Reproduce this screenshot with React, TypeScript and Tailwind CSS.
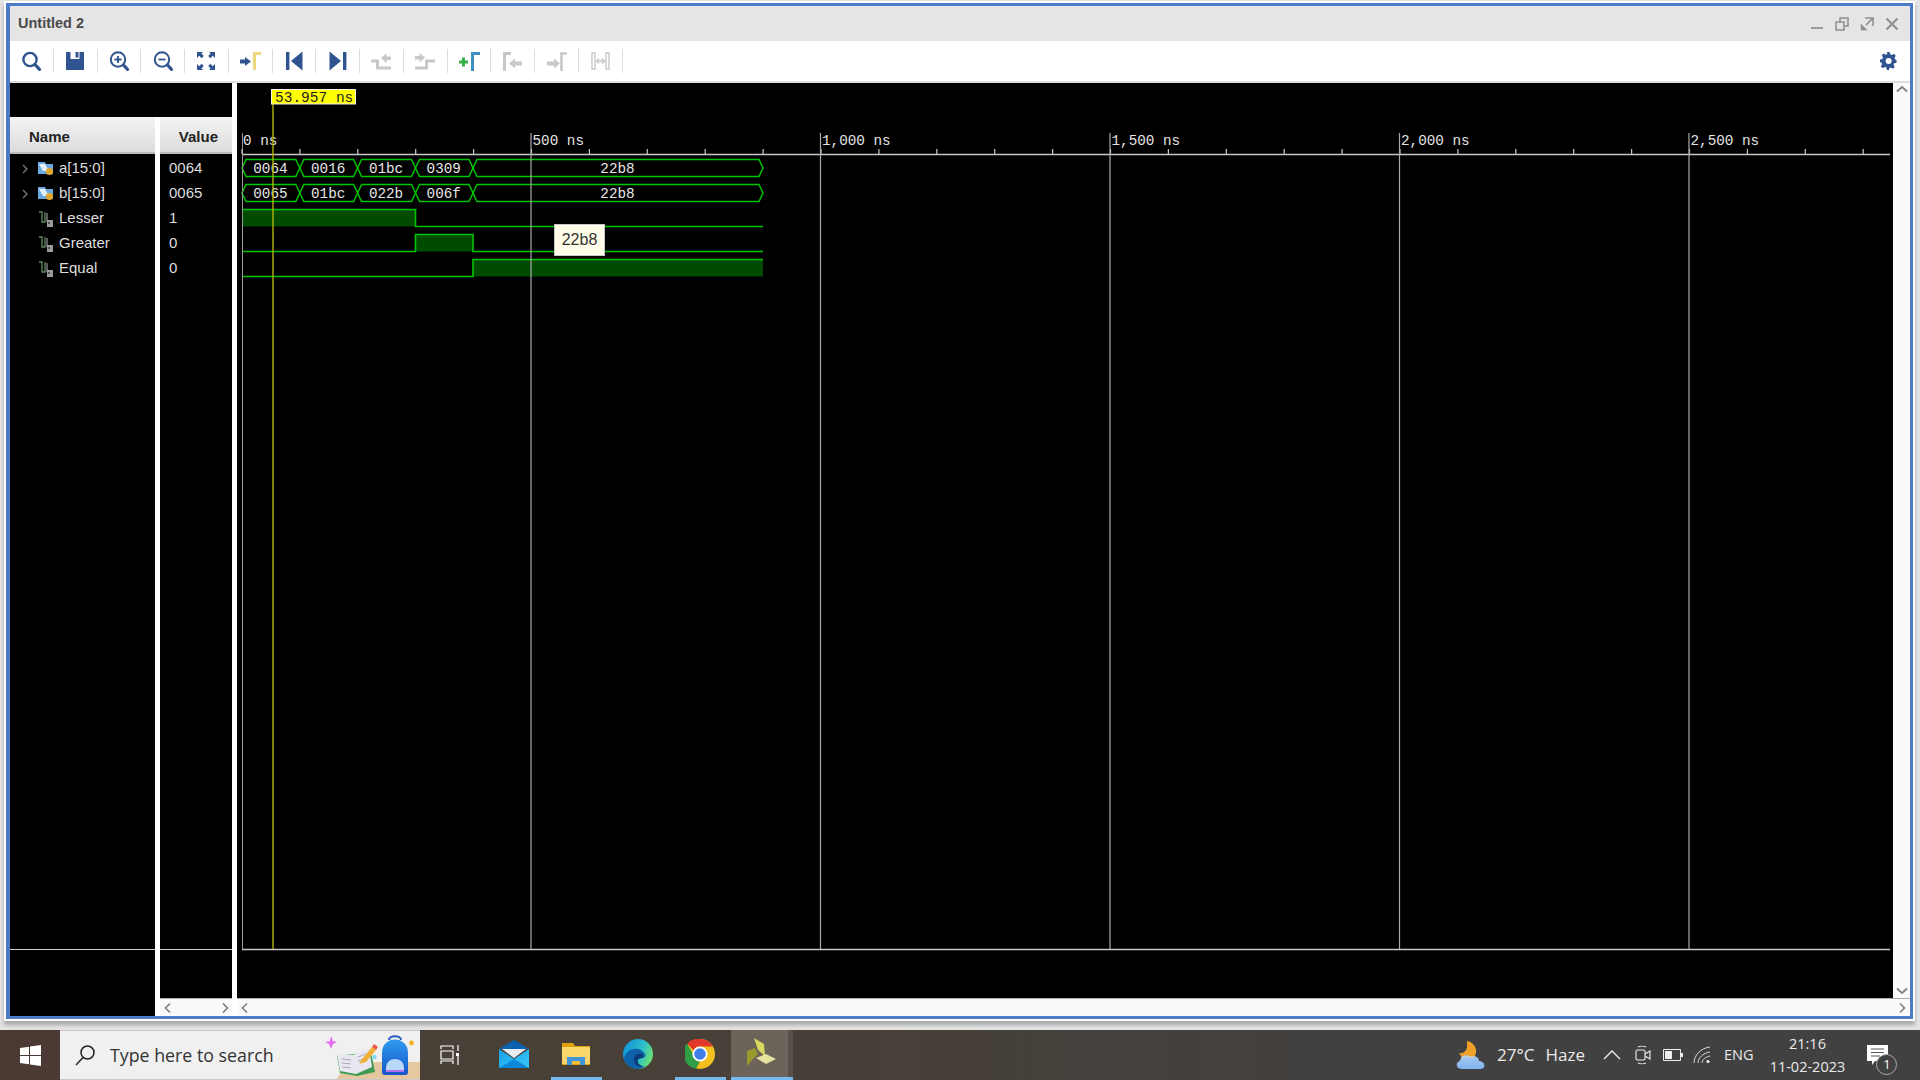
import type { ReactNode } from "react";

const NAVY = "#2f5490";
const GREY = "#c8c8c8";

/* ---------- toolbar icons ---------- */
const toolIcons: ReactNode[] = [
  <g key="find" fill="none" stroke={NAVY}>
    <circle cx="11" cy="10.5" r="6.6" strokeWidth="2.4" />
    <path d="M16 15.5l4.5 4.8" strokeWidth="3.2" strokeLinecap="round" />
  </g>,
  <g key="save">
    <path d="M3 3h18v18H3z" fill={NAVY} />
    <path d="M7.5 3h9v7h-9z" fill="#fff" />
    <path d="M12.5 3h3v5.5h-3z" fill={NAVY} />
  </g>,
  <g key="zoomin" fill="none" stroke={NAVY}>
    <circle cx="11" cy="10.5" r="7.2" strokeWidth="2" />
    <path d="M16.5 16l4 4.3" strokeWidth="3.2" strokeLinecap="round" />
    <path d="M7.5 10.5h7M11 7v7" strokeWidth="1.8" />
  </g>,
  <g key="zoomout" fill="none" stroke={NAVY}>
    <circle cx="11" cy="10.5" r="7.2" strokeWidth="2" />
    <path d="M16.5 16l4 4.3" strokeWidth="3.2" strokeLinecap="round" />
    <path d="M7.5 10.5h7" strokeWidth="1.8" />
  </g>,
  <g key="fit" fill={NAVY}>
    <path d="M3 3h6L7.4 4.6l2.4 2.4-2.2 2.2-2.4-2.4L3 9z" />
    <path d="M21 3h-6l1.6 1.6-2.4 2.4 2.2 2.2 2.4-2.4L21 9z" />
    <path d="M3 21h6l-1.6-1.6 2.4-2.4-2.2-2.2-2.4 2.4L3 15z" />
    <path d="M21 21h-6l1.6-1.6-2.4-2.4 2.2-2.2 2.4 2.4L21 15z" />
  </g>,
  <g key="cursor">
    <path d="M2 10.5h5V8l6 4.5L7 17v-2.5H2z" fill={NAVY} />
    <path d="M16.5 21V4.5H23" fill="none" stroke="#ecd67e" strokeWidth="3.2" />
  </g>,
  <g key="first" fill={NAVY}>
    <path d="M4 3h3.4v18H4z" />
    <path d="M20.5 2.5v19L9 12z" />
  </g>,
  <g key="last" fill={NAVY}>
    <path d="M17 3h3.4v18H17z" />
    <path d="M3.5 2.5v19L15 12z" />
  </g>,
  <g key="prev">
    <path d="M2 12h6.5v7H22" fill="none" stroke={GREY} strokeWidth="3" />
    <path d="M12 9l5.5-4.5v3H22v3.4h-4.5v3z" fill={GREY} />
  </g>,
  <g key="next">
    <path d="M2 19h11.5v-7H22" fill="none" stroke={GREY} strokeWidth="3" />
    <path d="M12 8.5L6.5 4v3H2v3.4h4.5v3z" fill={GREY} />
  </g>,
  <g key="add">
    <path d="M2 13h9M6.5 8.5v9" stroke="#35b34a" strokeWidth="3" fill="none" />
    <path d="M15.5 22V4.5H23" fill="none" stroke="#3f8fc4" strokeWidth="3" />
  </g>,
  <g key="prevmark">
    <path d="M3.5 22V4.5H10" fill="none" stroke={GREY} strokeWidth="3" />
    <path d="M8 14.5l6-5v3h7v4h-7v3z" fill={GREY} />
  </g>,
  <g key="nextmark">
    <path d="M3 12.5h7v-3l6 5-6 5v-3H3z" fill={GREY} />
    <path d="M17.5 22V4.5H23" fill="none" stroke={GREY} strokeWidth="2.6" />
  </g>,
  <g key="swap" fill="none" stroke={GREY}>
    <path d="M4 4h3v16H4zM18 4h3v16h-3z" strokeWidth="1.4" />
    <path d="M8.5 12h8" strokeWidth="1.6" />
    <path d="M11 9.5L8.5 12l2.5 2.5M14 9.5l2.5 2.5-2.5 2.5" strokeWidth="1.4" />
  </g>,
];

function ToolButton({ children }: { children: ReactNode }) {
  return (
    <div className="flex h-[24px] w-[43.75px] shrink-0 items-center justify-center border-r border-[#dcdcdc]">
      <svg width="24" height="24" viewBox="0 0 24 24">
        {children}
      </svg>
    </div>
  );
}

/* ---------- signal list ---------- */
const signals = [
  { name: "a[15:0]", value: "0064", bus: true },
  { name: "b[15:0]", value: "0065", bus: true },
  { name: "Lesser", value: "1", bus: false },
  { name: "Greater", value: "0", bus: false },
  { name: "Equal", value: "0", bus: false },
];

function BusIcon() {
  return (
    <svg width="16" height="16" viewBox="0 0 16 16">
      <path d="M0 1h7l1 2h7v10H0z" fill="#6aa8e0" />
      <path d="M1 3h6l4 7H5z" fill="#e4f0fa" />
      <circle cx="11.5" cy="10.5" r="3.6" fill="#e0a82e" />
    </svg>
  );
}

function LogicIcon() {
  return (
    <svg width="16" height="18" viewBox="0 0 16 18">
      <path d="M1 2h3v10h3V2" fill="none" stroke="#5d8a5d" strokeWidth="1.3" />
      <path d="M9 3v9" stroke="#8a8a8a" strokeWidth="1.3" />
      <path d="M9 10h6v7H9z" fill="#9a9a9a" />
      <path d="M10 12h2v2h-2z" fill="#555" />
    </svg>
  );
}

function NameRow({ name, bus }: { name: string; bus: boolean }) {
  return (
    <div className="flex h-[25px] items-center text-[15px] text-[#dedede]">
      <div className="flex w-[28px] justify-start pl-[11px]">
        {bus && (
          <svg width="8" height="12" viewBox="0 0 8 12">
            <path d="M2 2l4 4-4 4" fill="none" stroke="#777" strokeWidth="1.4" />
          </svg>
        )}
      </div>
      <div className="flex w-[21px] justify-start">{bus ? <BusIcon /> : <LogicIcon />}</div>
      <span>{name}</span>
    </div>
  );
}

/* ---------- waveform canvas ---------- */
const GREEN = "#00c400";
const DARK = "#004b00";
const X0 = 242;
const X1 = 763;
const NS500 = 289.5;
const EDGES = [242, 299.8, 357.6, 415.5, 473, X1];
const buses = [
  { top: 159.5, labels: ["0064", "0016", "01bc", "0309", "22b8"] },
  { top: 184.5, labels: ["0065", "01bc", "022b", "006f", "22b8"] },
];
const bits = [
  { base: 226.5, start: 242, end: 415.5 },
  { base: 251.5, start: 415.5, end: 473 },
  { base: 276.5, start: 473, end: X1 },
];
const H = 17;
const rulerLabels = ["0 ns", "500 ns", "1,000 ns", "1,500 ns", "2,000 ns", "2,500 ns"];
const MONO = "'Liberation Mono', monospace";

function bitPath(start: number, end: number, base: number) {
  const top = base - H;
  const rise = start === X0 ? `M${X0} ${top}` : `M${X0} ${base}H${start}V${top}`;
  const fall = end === X1 ? `H${X1}` : `H${end}V${base}H${X1}`;
  return rise + fall;
}

function Waveform() {
  const minor = Array.from({ length: 29 }, (_, i) => X0 + (i * NS500) / 5).filter((x) => x < 1888);
  return (
    <svg className="block h-[915px] w-[1656px]" viewBox="237 83 1656 915">
      {/* wave traces */}
      {buses.map((b) => (
        <g key={b.top}>
          {b.labels.map((label, i) => {
            const s = EDGES[i];
            const e = EDGES[i + 1];
            const mid = b.top + H / 2;
            return (
              <g key={i}>
                <path
                  d={`M${s} ${mid}L${s + 4} ${b.top}H${e - 4}L${e} ${mid}L${e - 4} ${b.top + H}H${s + 4}Z`}
                  fill="none"
                  stroke={GREEN}
                  strokeWidth="1.5"
                />
                <text x={(s + e) / 2 - 0.5} y={mid + 4.5} textAnchor="middle" fontFamily={MONO} fontSize="14.3" fill="#e6e6e6">
                  {label}
                </text>
              </g>
            );
          })}
        </g>
      ))}
      {bits.map((b) => (
        <g key={b.base}>
          <path d={`M${b.start} ${b.base - H}H${b.end}V${b.base}H${b.start}Z`} fill={DARK} />
          <path d={bitPath(b.start, b.end, b.base)} fill="none" stroke={GREEN} strokeWidth="1.6" />
        </g>
      ))}

      {/* ruler and grid */}
      <path d="M242 154.5H1890" stroke="#c8c8c8" strokeWidth="1.5" />
      <path d="M242 949.5H1890" stroke="#c8c8c8" strokeWidth="1.5" />
      <path d="M242.5 133V949" stroke="#9a9a9a" />
      {minor.map((x) => (
        <path key={x} d={`M${x} 149V154`} stroke="#c8c8c8" strokeWidth="1.2" />
      ))}
      {rulerLabels.map((label, i) => (
        <g key={label}>
          {i > 0 && <path d={`M${X0 + i * NS500 - 0.5} 133V949`} stroke="#aaaaaa" strokeWidth="1.2" />}
          <text x={X0 + i * NS500 + 1} y="145" fontFamily={MONO} fontSize="14.3" fill="#e4e4e4">
            {label}
          </text>
        </g>
      ))}

      {/* cursor */}
      <path d="M273 104V949" stroke="#b4b400" strokeWidth="1.4" />
      <rect x="271.5" y="89.5" width="84" height="14.5" fill="#ffff00" stroke="#f0f0f0" />
      <text x="275" y="101.5" fontFamily={MONO} fontSize="14.5" fill="#222">
        53.957 ns
      </text>
    </svg>
  );
}

function Chevron({ dir }: { dir: "left" | "right" | "up" | "down" }) {
  const paths = {
    left: "M7 1.5L2.5 6 7 10.5",
    right: "M3 1.5L7.5 6 3 10.5",
    up: "M1 7.5L6 3l5 4.5",
    down: "M1 3.5L6 8l5-4.5",
  };
  return (
    <svg width="12" height="12" viewBox="0 0 12 12">
      <path d={paths[dir]} fill="none" stroke="#808080" strokeWidth="1.7" />
    </svg>
  );
}

/* ---------- taskbar drawings ---------- */
function SearchSticker() {
  return (
    <svg className="ml-auto block" width="98" height="48" viewBox="322 1031 98 48">
      <defs>
        <linearGradient id="pack" x1="0" y1="0" x2="0" y2="1">
          <stop offset="0" stopColor="#2f9bf0" />
          <stop offset="1" stopColor="#1656c8" />
        </linearGradient>
      </defs>
      <path d="M336 1080l12-18h72v18z" fill="#e5c8a0" />
      <path d="M325 1042l5-1 1-5 2 5 4 1-4 2-2 5-2-5z" fill="#e36ef0" />
      <path d="M337 1056l17-2 17-2 4 20-18 4-17-3z" fill="#3f9c52" />
      <path d="M337 1054l16 1 16-7 3 19-16 7-16-3z" fill="#e9e8f2" />
      <path d="M342 1059l9 1M342 1063l9 1M342 1067l9 1M358 1057l8-3M358 1061l8-3" stroke="#a9a9b8" strokeWidth="1" />
      <path d="M359 1064l3-5 10-12 4 3-10 12z" fill="#f0b038" />
      <path d="M372 1047l2-3 4 3-2 3z" fill="#ea5a4a" />
      <circle cx="374.5" cy="1057" r="2.2" fill="#7fdcf0" />
      <path d="M389 1040c0-5 12-5 12 0" fill="none" stroke="#2560c8" strokeWidth="2" />
      <path d="M382 1053c0-18 26-18 26 0v19c0 3-2 3-4 3h-18c-2 0-4 0-4-3z" fill="url(#pack)" />
      <path d="M386 1068c0-12 18-12 18 0v3h-18z" fill="#b8d8f8" />
      <path d="M386 1070h18v2h-18z" fill="#b070f0" />
      <circle cx="411.5" cy="1043" r="2.4" fill="#f5b020" />
    </svg>
  );
}

function MailIcon() {
  return (
    <svg width="30" height="28" viewBox="0 0 30 28">
      <defs>
        <linearGradient id="mailb" x1="0" y1="0" x2="1" y2="1">
          <stop offset="0" stopColor="#18a0e8" />
          <stop offset="1" stopColor="#38c8f8" />
        </linearGradient>
      </defs>
      <path d="M0 9L15 0l15 9z" fill="#0a62b0" />
      <path d="M3 9h24L15 18z" fill="#e8eef4" />
      <path d="M0 9l15 10L30 9v19H0z" fill="url(#mailb)" />
      <path d="M0 28L15 19l15 9z" fill="#0f88d8" />
    </svg>
  );
}

function FolderIcon() {
  return (
    <svg width="28" height="24" viewBox="0 0 28 24">
      <path d="M0 1h11l2 3h15v19H0z" fill="#e0a010" />
      <path d="M0 5h28v17H0z" fill="#fad76a" />
      <path d="M5 15h18v8h-5v-4h-8v4H5z" fill="#3f95d8" />
      <path d="M10 19h8v3h-8z" fill="#f0c040" />
    </svg>
  );
}

function EdgeIcon() {
  return (
    <svg width="30" height="30" viewBox="0 0 30 30">
      <defs>
        <linearGradient id="edgeg" x1="0" y1="0.2" x2="1" y2="0.6">
          <stop offset="0" stopColor="#1190d8" />
          <stop offset="0.6" stopColor="#2cc0c8" />
          <stop offset="1" stopColor="#70e070" />
        </linearGradient>
      </defs>
      <circle cx="15" cy="15" r="15" fill="url(#edgeg)" />
      <path d="M1 19c3-9 11-11 17-8 5 3 6 7 2 8-3 1-8 0-8 3 0 3 5 6 10 5-3 2-5 3-7 3C8 30 2 26 1 19z" fill="#0f62a8" />
      <path d="M11 20c0-5 5-6 8-5 2 1 1 4-1 4-2 1-4 1-3 4 0 2 3 4 6 4-6 2-10-2-10-7z" fill="#0a3a78" />
    </svg>
  );
}

function ChromeIcon() {
  return (
    <svg width="30" height="30" viewBox="0 0 30 30">
      <circle cx="15" cy="15" r="15" fill="#f4c020" />
      <path d="M15 0a15 15 0 0 1 13 7.5H15a7.5 7.5 0 0 0-6.5 3.8L2 4.6A15 15 0 0 1 15 0z" fill="#e0392b" />
      <path d="M2 4.6l6.5 11.3A7.5 7.5 0 0 0 15 22.5L11 29.5A15 15 0 0 1 2 4.6z" fill="#2f9e44" />
      <circle cx="15" cy="15" r="7.6" fill="#fff" />
      <circle cx="15" cy="15" r="5.8" fill="#3f7ee8" />
    </svg>
  );
}

function VivadoIcon() {
  return (
    <svg width="30" height="32" viewBox="0 0 30 32">
      <path d="M7 0l10 6 1 12-7-6z" fill="#d8d860" />
      <path d="M0 13l8-3 3 6-5 5-6 7z" fill="#9a9a2a" />
      <path d="M9 20l10-4 10 5-10 5z" fill="#e4e4a0" />
    </svg>
  );
}

function WeatherIcon() {
  return (
    <svg width="30" height="30" viewBox="0 0 30 30">
      <defs>
        <linearGradient id="cloud" x1="0" y1="0" x2="0" y2="1">
          <stop offset="0" stopColor="#a8c8ec" />
          <stop offset="1" stopColor="#7fb4f0" />
        </linearGradient>
      </defs>
      <path d="M3 13c5 1 9-3 8-9 0-1 0-2 0-3 6 1 10 6 9 12-1 4-4 6-8 6-4 0-7-2-9-6z" fill="#f0a028" />
      <path d="M5 29C0 29-1 22 4 21c0-5 7-8 11-4 3-2 8 0 8 4 6 0 8 8 1 8z" fill="url(#cloud)" />
      <path d="M5 17h14" stroke="#f4e8c8" strokeWidth="1" opacity="0.6" />
    </svg>
  );
}

function App() {
  return (
    <div className="flex h-[1080px] w-[1920px] flex-col overflow-hidden bg-[#e4e4e4] font-['Liberation_Sans',sans-serif]">
      {/* IDE window */}
      <div className="h-[1030px] shrink-0 pt-[3px] pr-[7px] pb-[11px] pl-[6px]">
        <div className="flex h-full flex-col border-x-[4px] border-y-[3px] border-r-[3px] border-[#4b7cc9] bg-white shadow-[0_0_0_2px_#fff,0_4px_4px_2px_#a8a8a8]">
          <div className="flex h-[35px] shrink-0 items-center justify-between bg-[#e5e5e5] pr-[10px] pl-[8px]">
            <span className="text-[14.5px] font-bold text-[#4a4a4a]">Untitled 2</span>
            <div className="flex items-center gap-[9px]">
              <svg width="16" height="16" viewBox="0 0 16 16">
                <path d="M2 12h12" stroke="#9a9a9a" strokeWidth="2" />
              </svg>
              <svg width="16" height="16" viewBox="0 0 16 16" fill="none" stroke="#8f8f8f" strokeWidth="1.5">
                <path d="M2 6h8v8H2zM6 6V2h8v8h-4" />
              </svg>
              <svg width="16" height="16" viewBox="0 0 16 16" fill="none" stroke="#8f8f8f" strokeWidth="1.6">
                <path d="M6 2h8v8M14 2L7 9" />
                <path d="M2 8v6h6z" fill="#8f8f8f" strokeWidth="0.5" />
              </svg>
              <svg width="16" height="16" viewBox="0 0 16 16">
                <path d="M2.5 2.5l11 11M13.5 2.5l-11 11" stroke="#8f8f8f" strokeWidth="2.2" />
              </svg>
            </div>
          </div>

          <div className="flex h-[42px] shrink-0 items-center justify-between border-b-2 border-[#dedede] bg-white pr-[12px] pb-[1px]">
            <div className="flex items-center">
              {toolIcons.map((icon, i) => (
                <ToolButton key={i}>{icon}</ToolButton>
              ))}
            </div>
            <svg width="18" height="18" viewBox="0 0 24 24">
              <path
                d="M10 0h4l.7 3.4 2.5 1 2.9-1.9 2.8 2.8-1.9 2.9 1 2.5L24 11.5v4l-3.4.7-1 2.5 1.9 2.9-2.8 2.8-2.9-1.9-2.5 1L13 26h-3l-.7-3.4-2.5-1-2.9 1.9-2.8-2.8 1.9-2.9-1-2.5L0 15v-4l3.4-.7 1-2.5-1.9-2.9 2.8-2.8 2.9 1.9 2.5-1z"
                transform="scale(0.92)"
                fill={NAVY}
              />
              <circle cx="11.5" cy="12" r="4" fill="#fff" />
            </svg>
          </div>

          <div className="flex min-h-0 flex-1 bg-white">
            {/* signal list: the black strip above the headers runs over both columns */}
            <div className="flex w-[222px] shrink-0 flex-col">
              <div className="h-[34px] shrink-0 bg-black" />
              <div className="flex min-h-0 flex-1">
                <div className="flex w-[145px] shrink-0 flex-col bg-black">
                  <div className="flex h-[37px] shrink-0 items-center border-b-2 border-[#bdbdbd] bg-gradient-to-b from-[#f4f4f4] to-[#dcdcdc] pt-[5px] pl-[19px] text-[15px] font-bold text-[#222]">
                    Name
                  </div>
                  <div className="flex-1 pt-[2px]">
                    {signals.map((s) => (
                      <NameRow key={s.name} name={s.name} bus={s.bus} />
                    ))}
                  </div>
                  <div className="h-[67px] shrink-0 border-t border-[#d0d0d0]" />
                </div>

                <div className="ml-[5px] flex w-[72px] shrink-0 flex-col">
                  <div className="flex flex-1 flex-col bg-black">
                    <div className="flex h-[37px] shrink-0 items-center justify-end border-b-2 border-[#bdbdbd] bg-gradient-to-b from-[#f4f4f4] to-[#dcdcdc] pt-[5px] pr-[14px] text-[15px] font-bold text-[#222]">
                      Value
                    </div>
                    <div className="flex-1 pt-[2px]">
                      {signals.map((s) => (
                        <div key={s.name} className="flex h-[25px] items-center pl-[9px] text-[15px] text-[#dedede]">
                          {s.value}
                        </div>
                      ))}
                    </div>
                    <div className="h-[49px] shrink-0 border-t border-[#d0d0d0]" />
                  </div>
                  <div className="flex h-[18px] shrink-0 items-center justify-between border-t border-[#aaa] bg-[#fafafa] pl-[3px]">
                    <Chevron dir="left" />
                    <Chevron dir="right" />
                  </div>
                </div>
              </div>
            </div>

            {/* waveform */}
            <div className="ml-[5px] flex min-w-0 flex-1 flex-col">
              <div className="relative flex flex-1">
                <div className="w-[1656px] shrink-0 bg-black">
                  <Waveform />
                </div>
                <div className="flex flex-1 flex-col items-center justify-between bg-[#fafafa] py-[1px]">
                  <Chevron dir="up" />
                  <Chevron dir="down" />
                </div>
                <div className="absolute top-[141px] left-[317px] flex h-[32px] w-[51px] items-center justify-center border border-[#c8c8c8] bg-[#fffde9] text-[16px] text-[#333]">
                  22b8
                </div>
              </div>
              <div className="flex h-[18px] shrink-0 items-center justify-between border-t border-[#aaa] bg-[#fafafa] pr-[1px] pl-[3px]">
                <Chevron dir="left" />
                <Chevron dir="right" />
              </div>
            </div>
          </div>
        </div>
      </div>

      {/* taskbar */}
      <div className="flex h-[50px] shrink-0 items-stretch bg-gradient-to-r from-[#4a4038] via-[#484038] via-45% to-[#414141] to-75% font-['Open_Sans',sans-serif]">
        <div className="flex w-[60px] shrink-0 items-center justify-center bg-[#4b3a33]">
          <svg width="21" height="21" viewBox="0 0 21 21" fill="#fff">
            <path d="M0 3l9-1.3V10H0zM10 1.5L21 0v10H10zM0 11h9v8.3L0 18zM10 11h11v10l-11-1.5z" />
          </svg>
        </div>
        <div className="flex w-[360px] shrink-0 items-center border-y border-[#c8c8c8] bg-[#f0f0f0] pl-[14px]">
          <svg width="22" height="22" viewBox="0 0 22 22" fill="none" stroke="#222" strokeWidth="1.5">
            <circle cx="13.5" cy="8.5" r="6.5" />
            <path d="M9 13.5L2 21" />
          </svg>
          <span className="ml-[14px] text-[17.8px] text-[#333]">Type here to search</span>
          <SearchSticker />
        </div>

        <div className="flex w-[63px] shrink-0 items-center justify-center pr-[4px]">
          <svg width="20" height="20" viewBox="0 0 20 20" fill="none" stroke="#fff" strokeWidth="1.2">
            <path d="M1 4V1h12v3M1 6h12v8H1zM1 19v-3h12v3M18 0v6M18 11v9" />
            <rect x="16" y="8" width="3" height="3" fill="#fff" stroke="none" />
          </svg>
        </div>
        <div className="flex w-[62px] shrink-0 items-center justify-center pb-[3px]">
          <MailIcon />
        </div>
        <div className="flex w-[62px] shrink-0 flex-col items-center">
          <div className="flex flex-1 items-center">
            <FolderIcon />
          </div>
          <div className="h-[3px] w-[51px] bg-[#76b9ed]" />
        </div>
        <div className="flex w-[62px] shrink-0 items-center justify-center pb-[3px]">
          <EdgeIcon />
        </div>
        <div className="flex w-[62px] shrink-0 flex-col items-center">
          <div className="flex flex-1 items-center">
            <ChromeIcon />
          </div>
          <div className="h-[3px] w-[51px] bg-[#76b9ed]" />
        </div>
        <div className="flex w-[62px] shrink-0 flex-col">
          <div className="flex flex-1">
            <div className="flex flex-1 items-center justify-center bg-[#6c635b] pl-[4px]">
              <VivadoIcon />
            </div>
            <div className="w-[5px] bg-[#575049]" />
          </div>
          <div className="h-[3px] bg-[#76b9ed]" />
        </div>

        <div className="ml-[663px] flex flex-1 items-center text-[#eaeaea]">
          <WeatherIcon />
          <span className="ml-[11px] text-[17px]">27°C</span>
          <span className="ml-[11px] text-[17px]">Haze</span>
          <svg className="ml-[18px]" width="18" height="10" viewBox="0 0 18 10" fill="none" stroke="#eee" strokeWidth="1.3">
            <path d="M1 9l8-8 8 8" />
          </svg>
          <svg className="ml-[14px]" width="16" height="20" viewBox="0 0 16 20" fill="none" stroke="#eee" strokeWidth="1.1">
            <rect x="1" y="5" width="9" height="10" rx="1.5" />
            <path d="M10 9l5-3v8l-5-3M3 2c2-1 6-1 8 0M3 18c2 1 6 1 8 0" />
          </svg>
          <svg className="ml-[12px]" width="20" height="12" viewBox="0 0 20 12">
            <path d="M.5.5h17v11H.5z" fill="none" stroke="#eee" />
            <path d="M2 2h7v8H2z" fill="#eee" />
            <path d="M18 4h2v4h-2z" fill="#eee" />
          </svg>
          <svg className="ml-[10px]" width="18" height="18" viewBox="0 0 18 18" fill="none" stroke="#d8d8d8" strokeWidth="1">
            <path d="M1 17C1 9 8 2 17 1M5 17c0-5 5-10 12-11M9 17c0-3 3-6 8-7" />
            <circle cx="15" cy="15.5" r="1.6" fill="#eee" stroke="none" />
          </svg>
          <span className="ml-[13px] text-[14.5px]">ENG</span>
          <div className="ml-[14px] flex w-[80px] flex-col items-center text-[14.5px] leading-[23px]">
            <span>21:16</span>
            <span>11-02-2023</span>
          </div>
          <div className="relative ml-[20px]">
            <svg width="21" height="20" viewBox="0 0 21 20">
              <path d="M0 0h21v16H8l-3 4v-4H0z" fill="#fff" />
              <path d="M4 4h13M4 7.5h13M4 11h9" stroke="#555" strokeWidth="1" />
            </svg>
            <div className="absolute top-[9px] left-[9px] flex h-[21px] w-[21px] items-center justify-center rounded-full border border-[#aaa] bg-[#414141] text-[13px] text-white">
              1
            </div>
          </div>
        </div>
      </div>
    </div>
  );
}

export default App;
